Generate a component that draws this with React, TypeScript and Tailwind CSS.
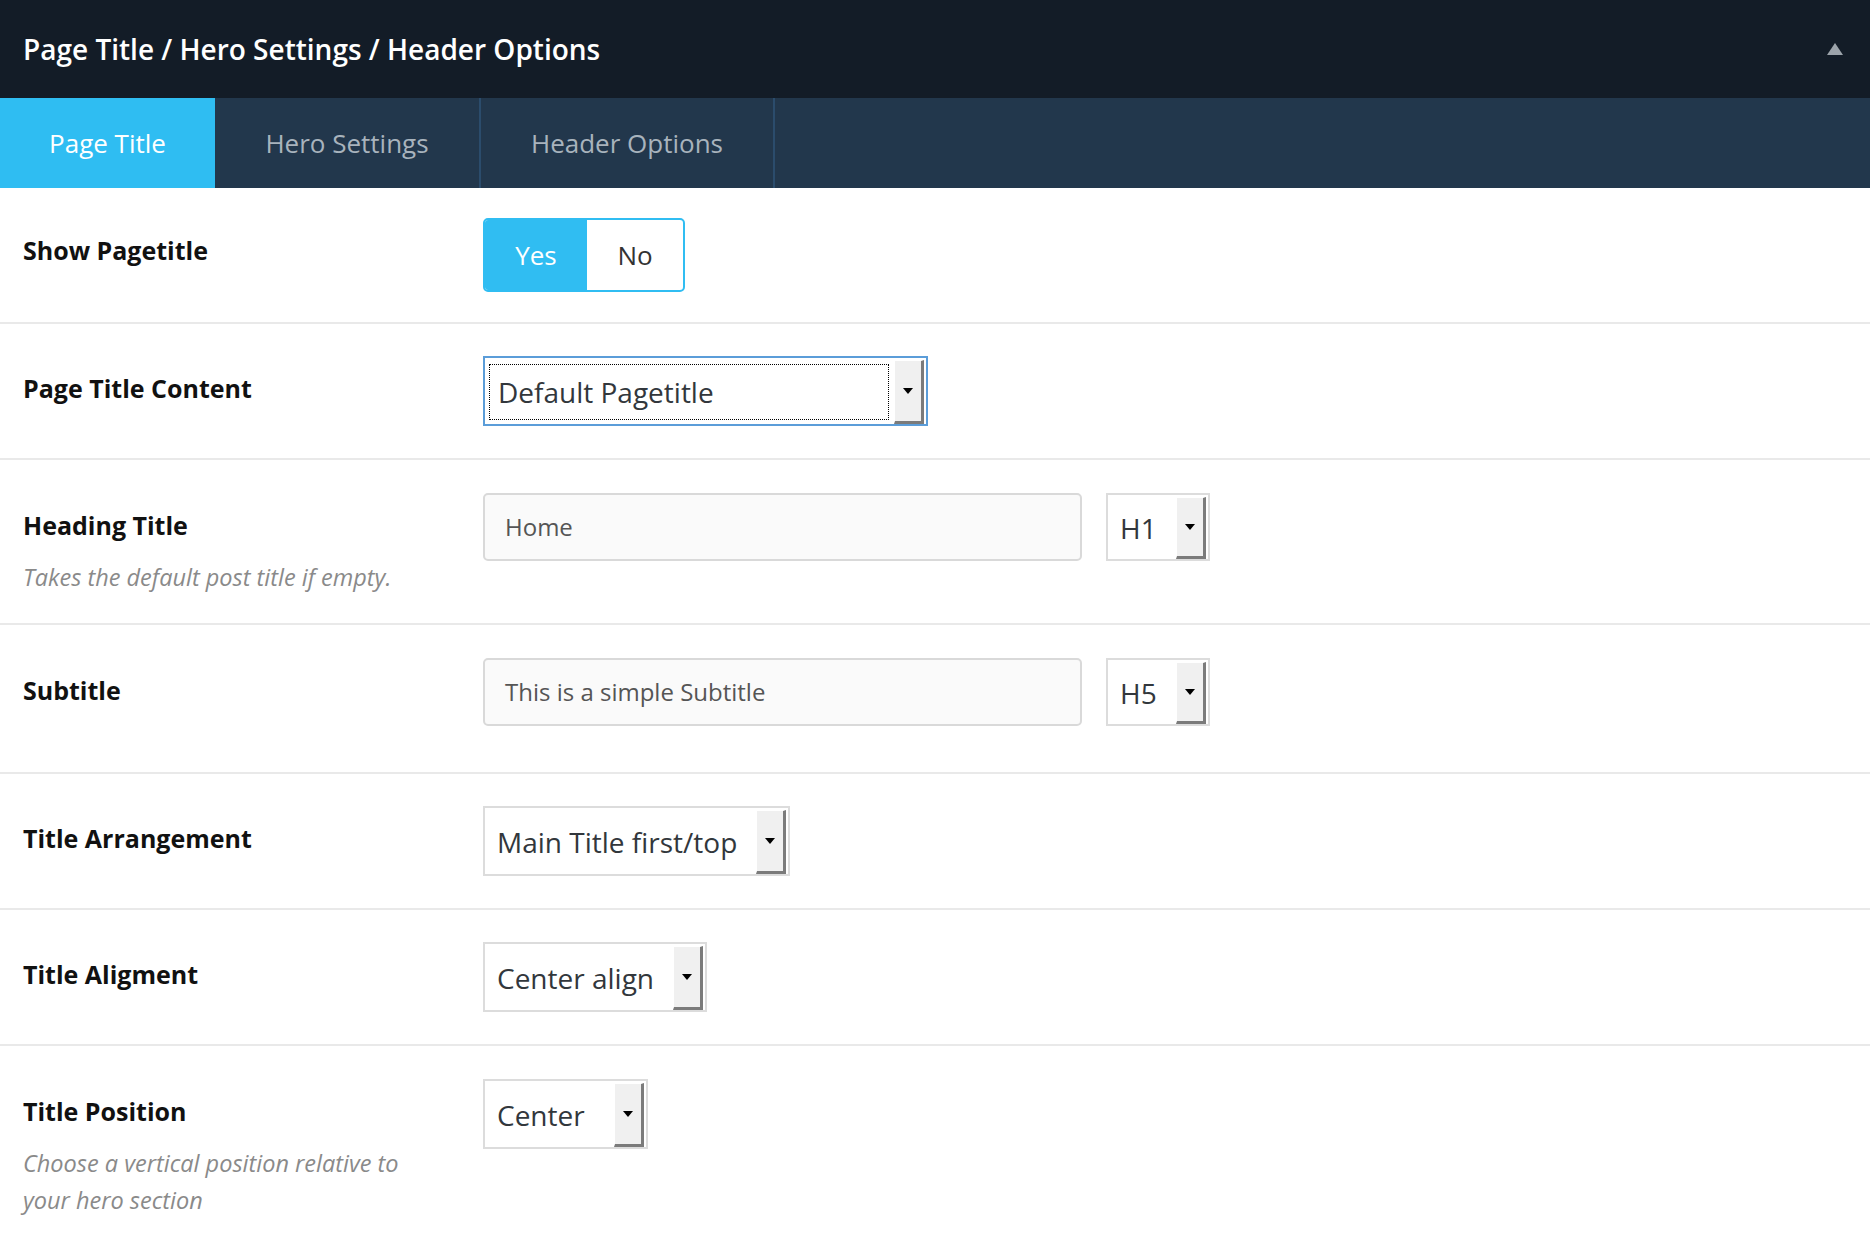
import React from 'react';

const font = { fontFamily: '"Open Sans", "Liberation Sans", sans-serif' };

function Arrow() {
  return (
    <span className="h-0 w-0 border-x-[5px] border-t-[6px] border-x-transparent border-t-black" />
  );
}

function SelectBox({
  value,
  width,
  height = 'h-[70px]',
  focused = false,
}: {
  value: string;
  width: string;
  height?: string;
  focused?: boolean;
}) {
  return (
    <div
      className={`${width} ${height} flex shrink-0 border-2 bg-white pt-[2px] pr-[2px] ${
        focused ? 'border-[#5b9dd9]' : 'border-[#dcdcdc]'
      }`}
    >
      {focused ? (
        <div className="my-[4px] ml-[4px] mr-[5px] flex flex-1 items-center border border-dotted border-black pl-[8px] text-[28px] text-[#32373c]">
          {value}
        </div>
      ) : (
        <div className="flex flex-1 items-center pl-[12px] text-[28px] text-[#32373c]">{value}</div>
      )}
      <div className="flex w-[30px] items-center justify-center border-t border-l border-t-white border-l-white border-r-[3px] border-b-[3px] border-r-[#7b7b7b] border-b-[#7b7b7b] bg-[#f0f0f0]">
        <Arrow />
      </div>
    </div>
  );
}

function TextBox({ value }: { value: string }) {
  return (
    <div className="flex h-[68px] w-[599px] shrink-0 items-center rounded-[5px] border-2 border-[#d9d9d9] bg-[#fafafa] px-[20px] text-[24px] text-[#555]">
      {value}
    </div>
  );
}

function Label({ label, desc }: { label: string; desc?: string }) {
  return (
    <div className="w-[483px] shrink-0 pl-[23px] pr-[60px] pt-[12px]">
      <div className="text-[25px] font-bold leading-[40px] text-[#111]">{label}</div>
      {desc && (
        <div className="mt-[14px] text-[23.5px] italic leading-[37px] text-[#8a8a8a]">{desc}</div>
      )}
    </div>
  );
}

function Row({
  label,
  desc,
  pb = 'pb-[32px]',
  pt = 'pt-[32px]',
  last = false,
  children,
}: {
  label: string;
  desc?: string;
  pb?: string;
  pt?: string;
  last?: boolean;
  children: React.ReactNode;
}) {
  return (
    <div className={`flex ${last ? '' : 'border-b-2 border-[#e9e9e9]'} ${pt} ${pb}`}>
      <Label label={label} desc={desc} />
      <div className="flex items-start gap-[24px]">{children}</div>
    </div>
  );
}

export default function App() {
  return (
    <div className="min-h-screen w-full bg-white" style={font}>
      <div className="flex h-[98px] items-center justify-between bg-[#131c27] pl-[23px] pr-[27px]">
        <div className="text-[28px] font-semibold text-white">Page Title / Hero Settings / Header Options</div>
        <svg width="16" height="12" viewBox="0 0 16 12">
          <path d="M8 0L16 12H0z" fill="#9ca3aa" />
        </svg>
      </div>

      <div className="flex h-[90px] bg-[#22374c] text-[26px]">
        <div className="flex w-[215px] items-center justify-center bg-[#2fbdf2] text-white">Page Title</div>
        <div className="flex w-[266px] items-center justify-center border-r-2 border-[#2b4c6c] text-[#a8b3bd]">
          Hero Settings
        </div>
        <div className="flex w-[294px] items-center justify-center border-r-2 border-[#2b4c6c] text-[#a8b3bd]">
          Header Options
        </div>
      </div>

      <Row label="Show Pagetitle" pt="pt-[30px]" pb="pb-[30px]">
        <div className="flex h-[74px] w-[202px] overflow-hidden rounded-[5px] border-2 border-[#30bdf2] text-[26px]">
          <div className="flex w-[102px] items-center justify-center bg-[#30bdf2] text-white">Yes</div>
          <div className="flex flex-1 items-center justify-center text-[#333]">No</div>
        </div>
      </Row>

      <Row label="Page Title Content">
        <SelectBox value="Default Pagetitle" width="w-[445px]" focused />
      </Row>

      <Row label="Heading Title" desc="Takes the default post title if empty." pt="pt-[33px]" pb="pb-[27px]">
        <TextBox value="Home" />
        <SelectBox value="H1" width="w-[104px]" height="h-[68px]" />
      </Row>

      <Row label="Subtitle" pt="pt-[33px]" pb="pb-[46px]">
        <TextBox value="This is a simple Subtitle" />
        <SelectBox value="H5" width="w-[104px]" height="h-[68px]" />
      </Row>

      <Row label="Title Arrangement">
        <SelectBox value="Main Title first/top" width="w-[307px]" />
      </Row>

      <Row label="Title Aligment">
        <SelectBox value="Center align" width="w-[224px]" />
      </Row>

      <Row
        label="Title Position"
        desc="Choose a vertical position relative to your hero section"
        pt="pt-[33px]"
        pb="pb-[27px]"
        last
      >
        <SelectBox value="Center" width="w-[165px]" />
      </Row>
    </div>
  );
}
